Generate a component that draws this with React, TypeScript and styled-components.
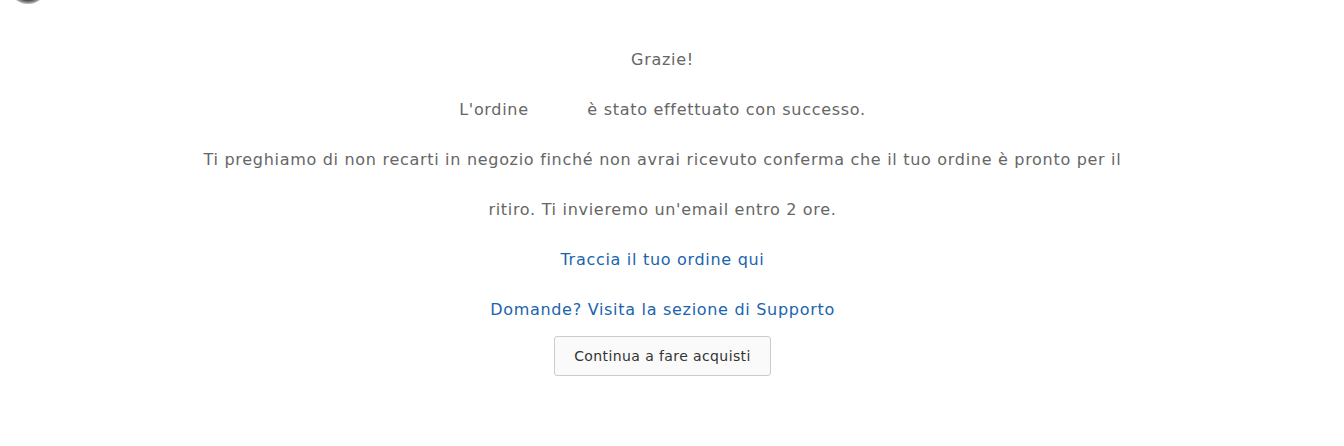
import React from "react";
import styled, { createGlobalStyle } from "styled-components";

const Global = createGlobalStyle`
  html, body { margin: 0; padding: 0; background: #fff; }
  body { font-family: "DejaVu Sans", "Liberation Sans", sans-serif; }
`;

const Page = styled.div`
  position: relative;
  width: 1344px;
  height: 446px;
  box-sizing: border-box;
  padding: 35px 19px 0 0;
  overflow: hidden;
`;

const Badge = styled.div`
  position: absolute;
  left: 8px;
  top: -36px;
  width: 40px;
  height: 40px;
  border-radius: 50%;
  background: radial-gradient(circle at 50% 50%, #333 0 55%, #bbb 70%, #e6e6e6 100%);
`;

const Content = styled.div`
  display: flex;
  flex-direction: column;
  align-items: center;
  text-align: center;
`;

const Line = styled.p<{ $wide?: boolean }>`
  margin: 0;
  font-size: 16px;
  letter-spacing: 0.7px;
  line-height: 50px;
  color: #666;
  max-width: ${(p) => (p.$wide ? "925px" : "none")};
`;

const Gap = styled.span`
  display: inline-block;
  width: 47px;
`;

const Link = styled.a`
  color: #1a64ad;
  text-decoration: none;
`;

const Button = styled.button`
  margin-top: 1px;
  width: 217px;
  height: 40px;
  border: 1px solid #ccc;
  border-radius: 3px;
  background: #fafafa;
  color: #333;
  font-family: inherit;
  font-size: 14px;
  letter-spacing: 0.4px;
`;

export default function App() {
  return (
    <>
      <Global />
      <Page>
        <Badge />
        <Content>
          <Line>Grazie!</Line>
          <Line>
            L'ordine <Gap /> è stato effettuato con successo.
          </Line>
          <Line $wide>
            Ti preghiamo di non recarti in negozio finché non avrai ricevuto conferma che il tuo ordine è pronto per il
            ritiro. Ti invieremo un'email entro 2 ore.
          </Line>
          <Line>
            <Link href="#">Traccia il tuo ordine qui</Link>
          </Line>
          <Line>
            <Link href="#">Domande? Visita la sezione di Supporto</Link>
          </Line>
          <Button>Continua a fare acquisti</Button>
        </Content>
      </Page>
    </>
  );
}
